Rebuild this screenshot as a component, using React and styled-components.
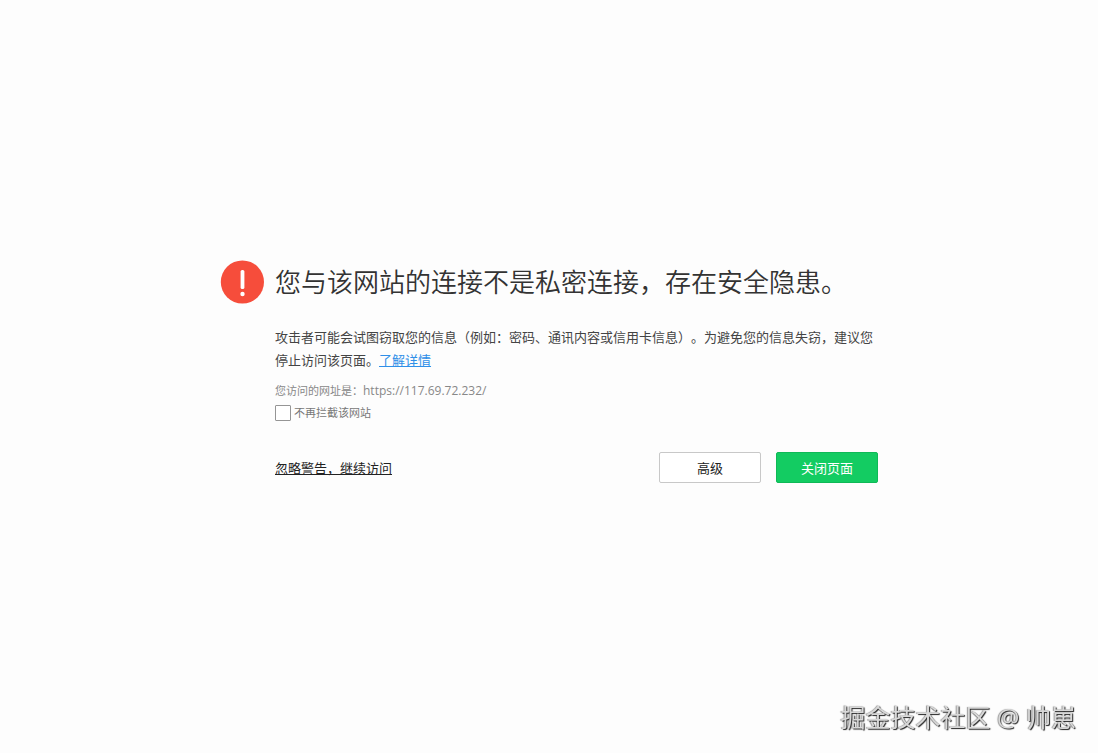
import React, { useState } from "react";
import styled, { createGlobalStyle } from "styled-components";

const GlobalStyle = createGlobalStyle`
  * {
    box-sizing: border-box;
  }
  body {
    margin: 0;
    background-color: #fdfdfd;
    color: #444;
    font-family: "Open Sans", "Noto Sans CJK SC", sans-serif;
    font-size: 13px;
    text-spacing-trim: space-all;
  }
`;

// start Layout
const Page = styled.main`
  display: flex;
  align-items: center;
  justify-content: center;
  min-height: 100vh;
  padding: 0 20px 10px;
`;

const Warning = styled.section`
  display: grid;
  grid-template-columns: 44px 1fr;
  column-gap: 11px;
  width: 100%;
  max-width: 658px;
`;

const Content = styled.div`
  display: flex;
  flex-direction: column;
`;

const WarningIcon = styled.svg`
  width: 44px;
  height: 44px;
`;
// end Layout

// start Text
const Title = styled.h1`
  margin: 0;
  font-size: 26px;
  font-weight: 350;
  line-height: 44px;
  color: #333;
`;

const Description = styled.p`
  margin: 22px 0 8px;
  line-height: 23px;
`;

const DetailLink = styled.a`
  color: #2f8fe8;
  text-decoration: underline;
`;

const Address = styled.p`
  margin: 0;
  font-size: 11px;
  line-height: 22px;
  color: #888;
`;

const Url = styled.span`
  font-size: 12px;
`;

const CheckLabel = styled.label`
  display: flex;
  align-items: center;
  gap: 3px;
  font-size: 11px;
  line-height: 22px;
  color: #777;
  cursor: pointer;
`;

const Checkbox = styled.input`
  appearance: none;
  width: 16px;
  height: 16px;
  margin: 0;
  border: 1px solid #959595;
  border-radius: 1px;
  background-color: #fff;
  cursor: pointer;
  &:checked {
    background-color: #13cc62;
  }
`;
// end Text

// start Actions
const Actions = styled.div`
  display: flex;
  align-items: center;
  gap: 15px;
  margin-top: 28px;
`;

const IgnoreLink = styled.a`
  margin-right: auto;
  color: #222;
  text-decoration: underline;
`;

const Button = styled.button`
  width: 102px;
  height: 31px;
  padding: 0;
  border: 1px solid ${(props) => (props.$primary ? "#0fb957" : "#c8c8c8")};
  border-radius: 2px;
  background-color: ${(props) => (props.$primary ? "#13cc62" : "#fff")};
  color: ${(props) => (props.$primary ? "#fff" : "#222")};
  font-family: inherit;
  font-size: 13px;
  cursor: pointer;
`;
// end Actions

const Watermark = styled.div`
  position: fixed;
  right: 22px;
  bottom: 18px;
  font-size: 25px;
  line-height: 36px;
  color: #d8d8d8;
  text-shadow: 1px 1px 1px #222, -1px 0 1px #999;
`;

const App = () => {
  const [skipWarning, setSkipWarning] = useState(false);

  return (
    <>
      <GlobalStyle />
      <Page>
        <Warning>
          <WarningIcon viewBox="0 0 44 44" aria-hidden="true">
            <circle cx="22.4" cy="22" r="21.6" fill="#f64d3b" />
            <rect x="20.6" y="10" width="3.8" height="19" rx="1.6" fill="#fff" />
            <circle cx="22.5" cy="34" r="2.2" fill="#fff" />
          </WarningIcon>
          <Content>
            <Title>您与该网站的连接不是私密连接，存在安全隐患。</Title>
            <Description>
              攻击者可能会试图窃取您的信息（例如：密码、通讯内容或信用卡信息）。为避免您的信息失窃，建议您停止访问该页面。
              <DetailLink href="#detail">了解详情</DetailLink>
            </Description>
            <Address>
              您访问的网址是：<Url>https://117.69.72.232/</Url>
            </Address>
            <CheckLabel htmlFor="skip-warning">
              <Checkbox
                id="skip-warning"
                type="checkbox"
                checked={skipWarning}
                onChange={(e) => setSkipWarning(e.target.checked)}
              />
              不再拦截该网站
            </CheckLabel>
            <Actions>
              <IgnoreLink href="#continue">忽略警告，继续访问</IgnoreLink>
              <Button type="button">高级</Button>
              <Button type="button" $primary>
                关闭页面
              </Button>
            </Actions>
          </Content>
        </Warning>
      </Page>
      <Watermark>掘金技术社区 @ 帅崽</Watermark>
    </>
  );
};

export default App;
